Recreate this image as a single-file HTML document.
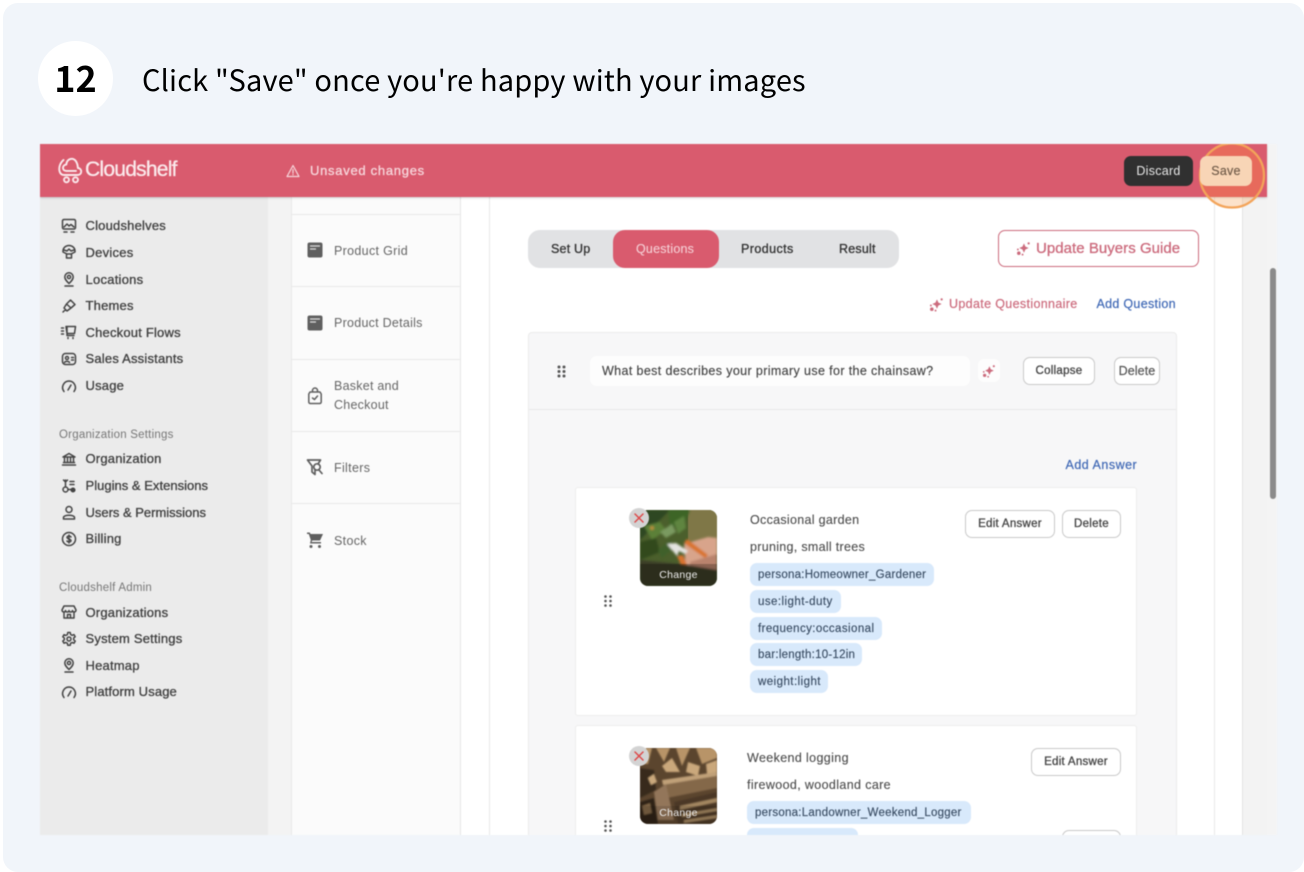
<!DOCTYPE html>
<html><head><meta charset="utf-8"><style>
html,body{margin:0;padding:0;background:#fff;width:1304px;height:872px;overflow:hidden}
#card{position:absolute;left:3px;top:3px;width:1301px;height:869px;background:#f1f5fa;border-radius:15px}
#wrap{position:absolute;left:0;top:0;width:1304px;height:872px;overflow:hidden;font-family:"Liberation Sans",sans-serif}
.h{position:absolute;color:#000;font-family:"Noto Sans CJK JP","Liberation Sans",sans-serif;white-space:nowrap;filter:blur(.25px)}
#shot{position:absolute;left:40px;top:144px;width:1237px;height:691px;overflow:hidden;background:#f3f3f3;filter:blur(.45px)}
#shot div,#shot span.a{position:absolute;white-space:nowrap;box-sizing:border-box}
#shot svg{position:absolute;overflow:visible}
.nav{left:45.5px;font-size:13px;color:#3f3f3f;-webkit-text-stroke:.3px #3f3f3f;letter-spacing:.2px;line-height:16px}
.sec{left:19px;font-size:11.5px;color:#777;letter-spacing:.22px;line-height:14px}
.ic{fill:none;stroke:#444;stroke-width:1.5;stroke-linecap:round;stroke-linejoin:round}
.pn{left:294px;font-size:12.5px;color:#666;letter-spacing:.32px;line-height:19px}
.ln{height:1px;background:#e9e9e9}
.btn{background:#fff;border:1px solid #c9c9c9;border-radius:7px;font-size:11.5px;color:#444;text-align:center;-webkit-text-stroke:.3px #444;letter-spacing:.28px}
.tag{background:#d8e9fb;border-radius:7px;height:23px;line-height:25px;font-size:11.5px;color:#394c63;padding:0 8px;letter-spacing:.25px;-webkit-text-stroke:.15px #394c63}
.t{font-size:12.5px;color:#4d4d4d;letter-spacing:.3px;line-height:16px;-webkit-text-stroke:.12px #4d4d4d}
.tab{font-size:12.5px;color:#333;-webkit-text-stroke:.3px #333;letter-spacing:.2px;line-height:16px}
.blue{font-size:12.5px;color:#3f68b5;letter-spacing:.3px;line-height:16px;-webkit-text-stroke:.2px #3f68b5}
.x{width:20px;height:20px;border-radius:50%;background:#d3d3d3}
.chg{font-size:10.5px;color:#eee;letter-spacing:.3px;line-height:13px;text-align:center}
</style></head><body>
<div id="wrap">
<div id="card"></div>
<div style="position:absolute;left:38px;top:41px;width:75px;height:75px;border-radius:50%;background:#fff"></div>
<div class="h" style="left:38px;top:41px;width:75px;text-align:center;line-height:72px;font-size:36px;font-weight:700">12</div>
<div class="h" style="left:142px;top:57px;line-height:44px;font-size:29px;letter-spacing:.16px">Click "Save" once you're happy with your images</div>

<div id="shot">
<!-- backgrounds -->
<div style="left:0;top:53px;width:228px;height:638px;background:#ebebeb"></div>
<div style="left:251px;top:53px;width:170px;height:638px;background:#fbfbfb;border-left:1px solid #e9e9e9;border-right:1px solid #e6e6e6"></div>
<div style="left:421px;top:53px;width:29px;height:638px;background:#fff"></div>
<div style="left:449px;top:53px;width:754px;height:638px;background:#fff;border-left:1px solid #e9e9e9;border-right:1px solid #e4e4e4"></div>
<div style="left:1174px;top:53px;width:1px;height:638px;background:#e9e9e9"></div>
<div style="left:1227px;top:0;width:10px;height:691px;background:#f4f4f4"></div>
<div style="left:1230px;top:124px;width:6px;height:231px;border-radius:3px;background:#8b8b8b"></div>

<!-- sidebar -->
<svg style="left:21px;top:74px" width="16" height="16" viewBox="0 0 16 16" class="ic"><rect x="1.500" y="1.500" width="13" height="9.500" rx="1.500"/><path d="M3 9l3-3 2 2 2-1.500 3 2.500M3 14h3M10 14h3"/></svg>
<div class="nav" style="top:74px">Cloudshelves</div>
<svg style="left:21px;top:100px" width="16" height="16" viewBox="0 0 16 16" class="ic"><path d="M2 7a6 5.500 0 0 1 12 0v1l-4 2H6L2 8zM3 6l3 1 2-2 2 2 3-1M5.500 10v4h5v-4"/></svg>
<div class="nav" style="top:101px;letter-spacing:.25px">Devices</div>
<svg style="left:21px;top:127px" width="16" height="16" viewBox="0 0 16 16" class="ic"><path d="M8 12.500C5.500 10 3.800 8.200 3.800 6a4.200 4.200 0 0 1 8.400 0c0 2.200-1.700 4-4.200 6.500z"/><circle cx="8" cy="6" r="1.600"/><path d="M4 15h8"/></svg>
<div class="nav" style="top:128px;letter-spacing:.25px">Locations</div>
<svg style="left:21px;top:154px" width="16" height="16" viewBox="0 0 16 16" class="ic"><path d="M9.500 2l4.500 4.500-4 3.500-4.500-4zM5.500 6L3 10l3 3 4-3M2 14l2.500-2.500"/></svg>
<div class="nav" style="top:154px">Themes</div>
<svg style="left:20px;top:180px" width="17" height="16" viewBox="0 0 17 16" class="ic"><path d="M6 2.500h9.500l-1 7H7zM7 2.500v9h7M1.500 4h2M1.500 7h2M1.500 10h2M8 13.500v1M13 13.500v1"/></svg>
<div class="nav" style="top:181px">Checkout Flows</div>
<svg style="left:21px;top:207px" width="16" height="16" viewBox="0 0 16 16" class="ic"><rect x="1.500" y="2.500" width="13" height="11" rx="3"/><circle cx="6" cy="7" r="1.500"/><path d="M3.500 11.500c.7-1.500 4.300-1.500 5 0M10.500 6.500h2M10.500 9h2"/></svg>
<div class="nav" style="top:207px">Sales Assistants</div>
<svg style="left:21px;top:234px" width="16" height="16" viewBox="0 0 16 16" class="ic"><path d="M3 13.500A6.500 6.500 0 0 1 8 3a6.500 6.500 0 0 1 5 10.500M7 12l3-5"/></svg>
<div class="nav" style="top:234px">Usage</div>

<div class="sec" style="top:284px">Organization Settings</div>
<svg style="left:21px;top:307px" width="16" height="16" viewBox="0 0 16 16" class="ic"><path d="M2 6l6-3.500L14 6zM3.500 6.500v5M6.500 6.500v5M9.500 6.500v5M12.500 6.500v5M2.500 11.500h11M1.500 14h13"/></svg>
<div class="nav" style="top:307px">Organization</div>
<svg style="left:21px;top:334px" width="16" height="16" viewBox="0 0 16 16" class="ic"><circle cx="4.500" cy="11.500" r="2.500"/><circle cx="12" cy="12" r="1.800" fill="#444"/><path d="M4.500 2v6.500M2.500 2l2 2 2-2M7 11.500h3M9 3.500h4M9 6.500h4"/></svg>
<div class="nav" style="top:334px;letter-spacing:.02px">Plugins &amp; Extensions</div>
<svg style="left:21px;top:361px" width="16" height="16" viewBox="0 0 16 16" class="ic"><circle cx="8" cy="4.500" r="3"/><path d="M2.500 14v-1.500c0-3 11-3 11 0V14z"/></svg>
<div class="nav" style="top:361px;letter-spacing:-.01px">Users &amp; Permissions</div>
<svg style="left:21px;top:387px" width="16" height="16" viewBox="0 0 16 16" class="ic" stroke-width="1.300"><circle cx="8" cy="8" r="6.500"/><path d="M10 6c-.4-1-3.600-1.300-4 .3C5.700 8 10.300 8 10 9.800c-.4 1.500-3.600 1.300-4 .2M8 4v8"/></svg>
<div class="nav" style="top:387px">Billing</div>

<div class="sec" style="top:437px">Cloudshelf Admin</div>
<svg style="left:21px;top:460px" width="16" height="16" viewBox="0 0 16 16" class="ic"><path d="M3 2h10l2 4c0 2.500-3.500 2.500-3.500.5C11.500 8.500 8 8.500 8 6.500c0 2-3.500 2-3.500 0C4.500 8.500 1 8.500 1 6zM3 8v6h10V8M6.500 14v-3.500h3V14"/></svg>
<div class="nav" style="top:461px">Organizations</div>
<svg style="left:21px;top:487px" width="16" height="16" viewBox="0 0 16 16" class="ic"><path d="M6.800 1.500h2.400l.4 2 1.500.8 1.900-.7 1.200 2.100-1.500 1.300v1.800l1.500 1.300-1.200 2.100-1.900-.7-1.500.8-.4 2H6.800l-.4-2-1.500-.8-1.900.7-1.200-2.100 1.500-1.300V7.100L1.800 5.800 3 3.700l1.900.7 1.500-.8z"/><circle cx="8" cy="8" r="2"/></svg>
<div class="nav" style="top:487px">System Settings</div>
<svg style="left:21px;top:513px" width="16" height="16" viewBox="0 0 16 16" class="ic"><path d="M8 12.500C5.500 10 3.800 8.200 3.800 6a4.200 4.200 0 0 1 8.400 0c0 2.200-1.700 4-4.200 6.500z"/><circle cx="8" cy="6" r="1.600"/><path d="M4 15h8"/></svg>
<div class="nav" style="top:514px">Heatmap</div>
<svg style="left:21px;top:540px" width="16" height="16" viewBox="0 0 16 16" class="ic"><path d="M3 13.500A6.500 6.500 0 0 1 8 3a6.500 6.500 0 0 1 5 10.500M7 12l3-5"/></svg>
<div class="nav" style="top:540px;letter-spacing:.13px">Platform Usage</div>

<!-- nav panel -->
<div class="ln" style="left:251px;top:70px;width:170px"></div>
<div class="ln" style="left:251px;top:142px;width:170px"></div>
<div class="ln" style="left:251px;top:215px;width:170px"></div>
<div class="ln" style="left:251px;top:287px;width:170px"></div>
<div class="ln" style="left:251px;top:359px;width:170px"></div>
<svg style="left:267px;top:98px" width="16" height="16" viewBox="0 0 16 16"><rect width="15" height="15" x=".5" y=".5" rx="2" fill="#5f5f5f"/><path d="M3 4h10M3 7h6" stroke="#ddd" stroke-width="1.200"/></svg>
<div class="pn" style="top:98px">Product Grid</div>
<svg style="left:267px;top:171px" width="16" height="16" viewBox="0 0 16 16"><rect width="15" height="15" x=".5" y=".5" rx="2" fill="#5f5f5f"/><path d="M3 4h10M3 7h6" stroke="#ddd" stroke-width="1.200"/></svg>
<div class="pn" style="top:170px;letter-spacing:.26px">Product Details</div>
<svg style="left:267px;top:243px" width="16" height="18" viewBox="0 0 16 18" fill="none" stroke="#5f5f5f" stroke-width="1.500" stroke-linecap="round" stroke-linejoin="round"><path d="M3 5h10l1.200 2v8a1.500 1.500 0 0 1-1.500 1.500H3.300A1.500 1.500 0 0 1 1.800 15V7zM5.500 5V3.500a2.500 2.500 0 0 1 5 0V5M5.500 11l2 1.500 3-3.500"/></svg>
<div class="pn" style="top:233px;letter-spacing:.24px">Basket and</div>
<div class="pn" style="top:252px;letter-spacing:.24px">Checkout</div>
<svg style="left:266px;top:314px" width="18" height="18" viewBox="0 0 18 18" fill="none" stroke="#5f5f5f" stroke-width="1.700" stroke-linecap="round" stroke-linejoin="round"><path d="M1.500 2h13L12 6M1.500 2L6 8v6l3 2.500V12"/><circle cx="11" cy="9" r="3.200"/><path d="M13 12l3 3.500"/></svg>
<div class="pn" style="top:315px">Filters</div>
<svg style="left:266px;top:387px" width="18" height="18" viewBox="0 0 18 18" fill="#5f5f5f"><path d="M1 1.500h2.800l.7 1.500H17l-3 6.500H6.300L5.500 11H15v1.500H4L4.800 9 2.800 3H1z"/><circle cx="5" cy="15.500" r="1.500"/><circle cx="13.500" cy="15.500" r="1.500"/></svg>
<div class="pn" style="top:388px">Stock</div>

<!-- tabs -->
<div style="left:488px;top:86px;width:371px;height:38px;background:#e1e2e4;border-radius:12px"></div>
<div style="left:573px;top:86px;width:106px;height:38px;background:#d95b6e;border-radius:12px"></div>
<div class="tab" style="left:511px;top:97px">Set Up</div>
<div class="tab" style="left:596px;top:97px;color:#f5cfd5;-webkit-text-stroke:.1px #f5cfd5">Questions</div>
<div class="tab" style="left:701px;top:97px;letter-spacing:.42px">Products</div>
<div class="tab" style="left:799px;top:97px">Result</div>

<div style="left:958px;top:86px;width:201px;height:37px;border:1.500px solid #cc6b7d;border-radius:7px;background:#fff"></div>
<svg style="left:976px;top:97px" width="15" height="15" viewBox="0 0 16 16" fill="#cc6b7d"><path d="M8.500 2.500l1.500 3.500 3.500 1.500-3.500 1.600-1.500 3.400-1.600-3.400-3.400-1.600 3.400-1.500z"/><circle cx="13.500" cy="2.500" r="1.200"/><circle cx="3" cy="13" r="1.900"/><circle cx="2" cy="9" r="1"/><circle cx="7" cy="14.500" r="1"/></svg>
<div style="left:996px;top:95px;font-size:15px;line-height:19px;color:#cc6b7d;letter-spacing:.04px;-webkit-text-stroke:.3px #cc6b7d">Update Buyers Guide</div>

<svg style="left:889px;top:153px" width="15" height="15" viewBox="0 0 16 16" fill="#cc6b7d"><path d="M8.500 2.500l1.500 3.500 3.500 1.500-3.500 1.600-1.500 3.400-1.600-3.400-3.400-1.600 3.400-1.500z"/><circle cx="13.500" cy="2.500" r="1.200"/><circle cx="3" cy="13" r="1.900"/><circle cx="2" cy="9" r="1"/><circle cx="7" cy="14.500" r="1"/></svg>
<div class="blue" style="left:909px;top:152px;color:#cc6b7d;-webkit-text-stroke:.2px #cc6b7d;letter-spacing:.35px">Update Questionnaire</div>
<div class="blue" style="left:1056.500px;top:152px">Add Question</div>

<!-- question card -->
<div style="left:488px;top:188px;width:649px;height:520px;background:#f7f7f8;border:1px solid #ebebeb;border-radius:4px"></div>
<div class="ln" style="left:489px;top:265px;width:647px;background:#e8e8e8"></div>
<svg style="left:517px;top:221px" width="9" height="13" fill="#555"><circle cx="2" cy="2" r="1.500"/><circle cx="7" cy="2" r="1.500"/><circle cx="2" cy="6.500" r="1.500"/><circle cx="7" cy="6.500" r="1.500"/><circle cx="2" cy="11" r="1.500"/><circle cx="7" cy="11" r="1.500"/></svg>
<div style="left:550px;top:212px;width:380px;height:30px;background:#fdfdfd;border-radius:7px"></div>
<div style="left:562px;top:219px;font-size:12.500px;line-height:16px;color:#444;letter-spacing:.375px;-webkit-text-stroke:.15px #444">What best describes your primary use for the chainsaw?</div>
<div style="left:938px;top:215px;width:22px;height:23px;background:#fdfdfd;border-radius:6px"></div>
<svg style="left:942px;top:220px" width="14" height="14" viewBox="0 0 16 16" fill="#cc6b7d"><path d="M8.500 2.500l1.500 3.500 3.500 1.500-3.500 1.600-1.500 3.400-1.600-3.400-3.400-1.600 3.400-1.500z"/><circle cx="13.500" cy="2.500" r="1.200"/><circle cx="3" cy="13" r="1.900"/><circle cx="2" cy="9" r="1"/><circle cx="7" cy="14.500" r="1"/></svg>
<div class="btn" style="left:983px;top:213px;width:72px;height:28px;line-height:27px">Collapse</div>
<div class="btn" style="left:1074px;top:213px;width:46px;height:28px;line-height:27px;font-size:12.500px;letter-spacing:.1px;color:#555;-webkit-text-stroke:.2px #555">Delete</div>
<div class="blue" style="left:1025.500px;top:313px;letter-spacing:.5px">Add Answer</div>

<!-- answer 1 -->
<div style="left:535px;top:343px;width:562px;height:229px;background:#fff;border:1px solid #ededed;border-radius:3px"></div>
<svg style="left:564px;top:451px" width="8" height="12" fill="#555"><circle cx="1.500" cy="1.500" r="1.300"/><circle cx="6.500" cy="1.500" r="1.300"/><circle cx="1.500" cy="6" r="1.300"/><circle cx="6.500" cy="6" r="1.300"/><circle cx="1.500" cy="10.500" r="1.300"/><circle cx="6.500" cy="10.500" r="1.300"/></svg>
<svg style="left:600px;top:366px" width="77" height="76" viewBox="0 0 77 76">
<defs><clipPath id="c1"><rect width="77" height="76" rx="8"/></clipPath><filter id="b1"><feGaussianBlur stdDeviation="1.100"/></filter></defs>
<g clip-path="url(#c1)"><rect width="77" height="76" fill="#4b5f2c"/><rect x="48" y="0" width="29" height="45" fill="#7f7747"/>
<g filter="url(#b1)">
<path d="M0 0h30L14 16 0 30z" fill="#2d4620"/><path d="M28 0h22l-6 14-14 4z" fill="#3d6528"/><path d="M4 16l16-4 6 8-14 10z" fill="#5b8038"/><path d="M0 32l16-4 4 14-20 8z" fill="#314a1f"/><path d="M20 22l12-8 4 8-10 6z" fill="#7a9a60"/><path d="M34 12l10-6 2 12-8 6z" fill="#5f8541"/><path d="M18 40l12-10 4 8-12 10z" fill="#41602a"/>
<circle cx="12" cy="18" r="2" fill="#b98f3a"/>
<path d="M44 34l24-7 9 1v34H46z" fill="#d8a48b"/><path d="M50 52l27-8v18H50z" fill="#b9836d"/>
<path d="M27 34l9-1 12 8-3 3-6-3-2 5z" fill="#e4e4e0"/><path d="M47 29l21 16-3 3-21-15z" fill="#d9732e"/><path d="M37 46l6-1 4 10-5 2z" fill="#d9732e"/>
<path d="M0 50l40 4 37 6v16H0z" fill="#3a3c28"/></g>
<rect y="54" width="77" height="22" fill="#000" opacity=".25"/></g></svg>
<div class="chg" style="left:600px;top:425px;width:77px">Change</div>
<div class="x" style="left:589px;top:364px"></div>
<svg style="left:593px;top:368px" width="12" height="12" fill="none" stroke="#dd4a4a" stroke-width="1.500" stroke-linecap="round"><path d="M2 2l8 8M10 2l-8 8"/></svg>

<div class="t" style="left:710px;top:368px">Occasional garden</div>
<div class="t" style="left:710px;top:395px">pruning, small trees</div>
<div class="tag" style="left:710px;top:419px;width:184px">persona:Homeowner_Gardener</div>
<div class="tag" style="left:710px;top:446px;width:91px;letter-spacing:.45px">use:light-duty</div>
<div class="tag" style="left:710px;top:473px;width:132px;letter-spacing:.42px">frequency:occasional</div>
<div class="tag" style="left:710px;top:499px;width:112px">bar:length:10-12in</div>
<div class="tag" style="left:710px;top:526px;width:78px;letter-spacing:.45px">weight:light</div>
<div class="btn" style="left:925px;top:366px;width:90px;height:28px;line-height:27px">Edit Answer</div>
<div class="btn" style="left:1022px;top:366px;width:59px;height:28px;line-height:27px">Delete</div>

<!-- answer 2 -->
<div style="left:535px;top:581px;width:562px;height:140px;background:#fff;border:1px solid #ededed;border-radius:3px"></div>
<svg style="left:564px;top:676px" width="8" height="12" fill="#555"><circle cx="1.500" cy="1.500" r="1.300"/><circle cx="6.500" cy="1.500" r="1.300"/><circle cx="1.500" cy="6" r="1.300"/><circle cx="6.500" cy="6" r="1.300"/><circle cx="1.500" cy="10.500" r="1.300"/><circle cx="6.500" cy="10.500" r="1.300"/></svg>
<svg style="left:600px;top:604px" width="77" height="76" viewBox="0 0 77 76">
<defs><clipPath id="c2"><rect width="77" height="76" rx="8"/></clipPath><filter id="b2"><feGaussianBlur stdDeviation=".8"/></filter></defs>
<g clip-path="url(#c2)"><rect width="77" height="76" fill="#5b452e"/>
<g filter="url(#b2)"><path d="M0 0h12l-4 16H0zM16 0l8 14 6-14zM36 0l6 18 8-18zM56 0l6 16 15-6V0z" fill="#b89468"/><path d="M22 18l10-8 8 14H26zM48 14l12 4-2 10-12-4zM66 16l11-4v12l-10 2z" fill="#caa87c"/><path d="M0 20l14 2 2 20-16 8z" fill="#38291c"/><path d="M8 30l6-4 3 8-6 3z" fill="#caa87c"/><path d="M22 32l55-8v4l-54 9z" fill="#c0a078"/><path d="M24 37l53-9v12l-50 10z" fill="#84684a"/><path d="M14 44l12-8 8 36H18z" fill="#93765a"/><path d="M34 54l43-10v32H38z" fill="#4c3827"/><path d="M40 58l37-8v4l-37 8zM42 66l35-6v3l-35 6zM44 72l33-5v3l-33 5z" fill="#a38660"/><path d="M0 54l14-4 4 26H0z" fill="#2f2418"/><path d="M2 58l8-3 2 10-8 2z" fill="#7e6444"/></g>
<rect y="58" width="77" height="18" fill="#000" opacity=".12"/></g></svg>
<div class="chg" style="left:600px;top:663px;width:77px">Change</div>
<div class="x" style="left:589px;top:602px"></div>
<svg style="left:593px;top:606px" width="12" height="12" fill="none" stroke="#dd4a4a" stroke-width="1.500" stroke-linecap="round"><path d="M2 2l8 8M10 2l-8 8"/></svg>
<div class="t" style="left:707px;top:606px;letter-spacing:.37px">Weekend logging</div>
<div class="t" style="left:707px;top:633px;letter-spacing:.37px">firewood, woodland care</div>
<div class="tag" style="left:707px;top:657px;width:224px">persona:Landowner_Weekend_Logger</div>
<div class="tag" style="left:707px;top:684px;width:111px"></div>
<div class="btn" style="left:991px;top:604px;width:90px;height:28px;line-height:27px">Edit Answer</div>
<div class="btn" style="left:1022px;top:686px;width:59px;height:28px;line-height:27px">Delete</div>

<!-- top bar -->
<div style="left:0;top:0;width:1227px;height:53px;background:#d95b6e;box-shadow:0 1px 2px rgba(0,0,0,.18)"></div>
<svg style="left:18px;top:13px" width="24" height="27" viewBox="0 0 24 27" fill="none" stroke="#fbe9ec" stroke-width="1.900" stroke-linecap="round" stroke-linejoin="round"><path d="M5.500 3C2 6 .3 11 1.800 15c.8 2 2.200 3 4.200 3h13.500c2.300 0 3.700-1.500 3.700-3.500 0-2-1.500-3.400-3.300-3.500C19.500 5 17 1.800 13.800 1.800 10.500 1.800 8.500 4.500 8.300 7.500c-2 .2-3.300 1.600-3.300 3.400 0 1.800 1.300 3 3.200 3H18"/><circle cx="8.500" cy="22.800" r="2.500"/><circle cx="17.500" cy="22.800" r="2.500"/></svg>
<div style="left:45px;top:13px;font-size:21px;line-height:26px;color:#fbeaec;letter-spacing:-.75px;-webkit-text-stroke:.3px #fbeaec">Cloudshelf</div>
<svg style="left:246px;top:20px" width="14" height="14" viewBox="0 0 14 14" fill="none" stroke="#f7d6db" stroke-width="1.200" stroke-linejoin="round" stroke-linecap="round"><path d="M7 1.500L13 12.500H1zM7 5.500v3.500M7 10.500v.2"/></svg>
<div style="left:270px;top:19px;font-size:13px;line-height:16px;color:#f7d6db;letter-spacing:.72px;-webkit-text-stroke:.3px #f7d6db">Unsaved changes</div>
<div style="left:1084px;top:12px;width:69px;height:30px;background:#303030;border-radius:7px;color:#e8e8e8;font-size:12.500px;line-height:30px;text-align:center;letter-spacing:.28px">Discard</div>
<!-- highlight ring -->
<svg style="left:1150px;top:-10px" width="84" height="84">
<defs><clipPath id="rbar"><rect x="0" y="10" width="84" height="53"/></clipPath><clipPath id="rlow"><rect x="0" y="63" width="84" height="30"/></clipPath></defs>
<circle cx="42" cy="41.500" r="32" fill="#f57a4a" fill-opacity=".5" clip-path="url(#rbar)"/>
<circle cx="42" cy="41.500" r="32" fill="#f8b67c" fill-opacity=".4" clip-path="url(#rlow)"/>
<circle cx="42" cy="41.500" r="32" fill="none" stroke="#f3a45a" stroke-width="2.300"/>
</svg>
<div style="left:1160px;top:12px;width:52px;height:30px;background:#f8d5b6;border-radius:7px;color:#6f5a48;font-size:12.500px;line-height:30px;text-align:center;letter-spacing:.25px;-webkit-text-stroke:.15px #6f5a48">Save</div>
</div>
</div>
</body></html>
